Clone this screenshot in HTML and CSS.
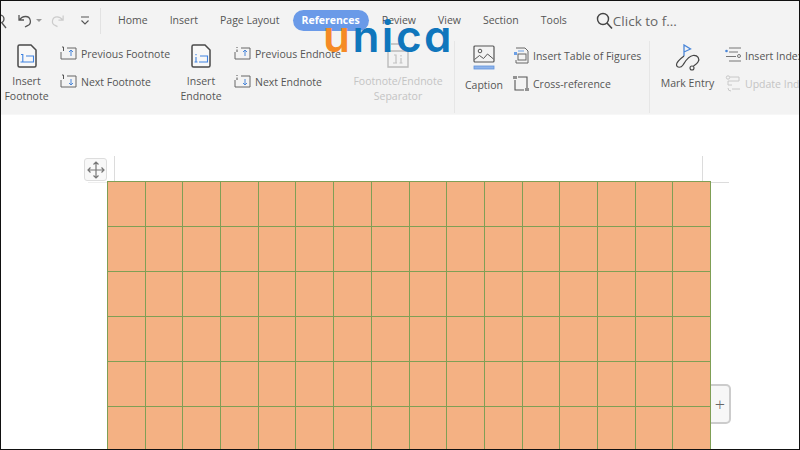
FILE: index.html
```html
<!DOCTYPE html>
<html lang="en">
<head>
<meta charset="utf-8">
<title>References</title>
<link rel="stylesheet" href="styles.css">
</head>
<body>
<div class="frame">
  <header class="ribbon">
    <div class="tabbar">
      <div class="quick">
        <svg class="qa-clip" width="8" height="16" viewBox="0 0 8 16"><circle cx="0" cy="6" r="4" fill="none" stroke="#555" stroke-width="1.3"/><path d="M2 10l4 5" stroke="#555" stroke-width="1.3"/></svg>
        <svg class="qa-undo" width="16" height="16" viewBox="0 0 16 16"><path d="M2 2v5h5M2.500 7C4 4.500 6 3.500 8.500 3.500a4.800 4.800 0 0 1 2 9.200L8 14" fill="none" stroke="#555" stroke-width="1.300"/></svg>
        <svg class="qa-caret" width="6" height="4" viewBox="0 0 6 4"><path d="M0 0h6L3 3z" fill="#999"/></svg>
        <svg class="qa-redo" width="15" height="16" viewBox="0 0 16 16"><path d="M14 2v5H9M13.500 7C12 4.500 10 3.500 7.500 3.500a4.800 4.800 0 0 0-2 9.200L8 14" fill="none" stroke="#ccc" stroke-width="1.300"/></svg>
        <svg class="qa-more" width="10" height="10" viewBox="0 0 10 10"><path d="M1 1h8M1.500 4.500L5 8l3.500-3.500" fill="none" stroke="#555" stroke-width="1.100"/></svg>
        <span class="qa-divider"></span>
      </div>
      <nav class="tabs">
        <span class="tab">Home</span>
        <span class="tab">Insert</span>
        <span class="tab">Page Layout</span>
        <span class="tab tab-active">References</span>
        <span class="tab">Review</span>
        <span class="tab">View</span>
        <span class="tab">Section</span>
        <span class="tab">Tools</span>
      </nav>
      <div class="search">
        <svg width="17" height="18" viewBox="0 0 17 18"><circle cx="7" cy="7" r="5.500" fill="none" stroke="#444" stroke-width="1.400"/><path d="M11 11l5 5.500" stroke="#444" stroke-width="1.600"/></svg>
        <span>Click to f...</span>
      </div>
    </div>

    <div class="tools">
      <div class="big w-footnote">
        <svg class="big-icon" width="20" height="24" viewBox="0 0 20 24"><path d="M1 2.500a1.500 1.500 0 0 1 1.500-1.500H14l5 5v15.500a1.500 1.500 0 0 1-1.500 1.500h-15A1.500 1.500 0 0 1 1 21.500z" fill="#f8f8f8" stroke="#4a4a4a" stroke-width="1.500"/><path d="M4 10.500h1.800v7M3.500 18h4.500M9 12h7.500v6H8" fill="none" stroke="#3f82e0" stroke-width="1.100"/></svg>
        <span class="big-label">Insert<br>Footnote</span>
      </div>
      <div class="small-col w-footnote-nav">
        <div class="small"><svg width="17" height="15" viewBox="0 0 17 15"><path d="M1 6v7h15V2H7" fill="none" stroke="#666"/><path d="M2 1h1.500v4" fill="none" stroke="#555"/><path d="M11 10V4M9 6l2-2 2 2" fill="none" stroke="#4a86d8"/></svg><span>Previous Footnote</span></div>
        <div class="small"><svg width="17" height="15" viewBox="0 0 17 15"><path d="M1 6v7h15V2H7" fill="none" stroke="#666"/><path d="M2 1h1.500v4" fill="none" stroke="#555"/><path d="M11 5v6M9 9l2 2 2-2" fill="none" stroke="#4a86d8"/></svg><span>Next Footnote</span></div>
      </div>
      <div class="big w-endnote">
        <svg class="big-icon" width="20" height="24" viewBox="0 0 20 24"><path d="M1 2.500a1.500 1.500 0 0 1 1.500-1.500H14l5 5v15.500a1.500 1.500 0 0 1-1.500 1.500h-15A1.500 1.500 0 0 1 1 21.500z" fill="#f8f8f8" stroke="#4a4a4a" stroke-width="1.500"/><path d="M5 10v1.300M5 13v5M3.500 18h3M9 12h7.500v6H8" fill="none" stroke="#3f82e0" stroke-width="1.100"/></svg>
        <span class="big-label">Insert<br>Endnote</span>
      </div>
      <div class="small-col w-endnote-nav">
        <div class="small"><svg width="17" height="15" viewBox="0 0 17 15"><path d="M1 6v7h15V2H7" fill="none" stroke="#666"/><path d="M3 1v1M3 3.500V6" fill="none" stroke="#555"/><path d="M11 10V4M9 6l2-2 2 2" fill="none" stroke="#4a86d8"/></svg><span>Previous Endnote</span></div>
        <div class="small"><svg width="17" height="15" viewBox="0 0 17 15"><path d="M1 6v7h15V2H7" fill="none" stroke="#666"/><path d="M3 1v1M3 3.500V6" fill="none" stroke="#555"/><path d="M11 5v6M9 9l2 2 2-2" fill="none" stroke="#4a86d8"/></svg><span>Next Endnote</span></div>
      </div>
      <div class="big w-separator muted">
        <svg class="big-icon separator-icon" width="22" height="25" viewBox="0 0 22 25"><path d="M4 1h14M1 8h20v16H1z" fill="none" stroke="#bbb" stroke-width="1.400"/><path d="M7 12h2v8M6 20h4M14 12v1.500M14 15v5M12.500 20h3" fill="none" stroke="#c2c2c2" stroke-width="1.200"/></svg>
        <span class="big-label">Footnote/Endnote<br>Separator</span>
      </div>
      <span class="divider"></span>
      <div class="big w-caption">
        <svg class="big-icon caption-icon" width="22" height="25" viewBox="0 0 22 25"><rect x="1" y="1" width="20" height="16" rx="1" fill="none" stroke="#555" stroke-width="1.200"/><circle cx="7" cy="6" r="1.800" fill="none" stroke="#555"/><path d="M1.500 14.500l5-4 4 3 4-4.500 6 5" fill="none" stroke="#555"/><rect x="1" y="21" width="20" height="3" fill="#8fb4ea" stroke="#5f92dc" stroke-width=".8"/></svg>
        <span class="big-label caption-label">Caption</span>
      </div>
      <div class="small-col w-figures">
        <div class="small"><svg width="16" height="17" viewBox="0 0 16 17"><path d="M3 1h9l3 3v12H3v-3" fill="none" stroke="#666"/><rect x="1" y="5" width="3" height="3" fill="#6b9fe6"/><rect x="5" y="7" width="8" height="6" fill="none" stroke="#666"/><path d="M5 4h6" stroke="#6b9fe6"/></svg><span>Insert Table of Figures</span></div>
        <div class="small"><svg width="16" height="17" viewBox="0 0 16 17"><path d="M5 2h9v11M11 15H2V5" fill="none" stroke="#555" stroke-width="1.100"/><path d="M1 1v3M3 1v3M13 13v3M15 13v3" stroke="#333" stroke-width="1"/></svg><span>Cross-reference</span></div>
      </div>
      <span class="divider"></span>
      <div class="big w-mark">
        <svg class="big-icon mark-icon" width="26" height="27" viewBox="0 0 26 27"><path d="M9 12V1l6.500 4L9 8" fill="none" stroke="#4a86d8" stroke-width="1.300"/><path d="M9 12C5 15 1 18 1.500 21C2 24 6 24 8 21C10 18 13 12 18 11.500C23 11 25 15 23 18C22 20 20 21 18.500 22" fill="none" stroke="#444" stroke-width="1.200"/><circle cx="17" cy="24" r="2" fill="none" stroke="#444" stroke-width="1.100"/></svg>
        <span class="big-label mark-label">Mark Entry</span>
      </div>
      <div class="small-col w-index">
        <div class="small"><svg width="16" height="17" viewBox="0 0 16 17"><path d="M4 1h12M4 5h9M1 9.500h10M4 14h12" fill="none" stroke="#777"/><circle cx="1.500" cy="4" r="1.300" fill="#4a86d8"/><circle cx="14" cy="9" r="1.500" fill="none" stroke="#777"/></svg><span>Insert Index</span></div>
        <div class="small muted"><svg width="16" height="17" viewBox="0 0 16 17"><circle cx="3" cy="2.500" r="1.700" fill="none" stroke="#c8c8c8"/><path d="M5 2h9v4H3v4h4M7 14h8M3 13a3 3 0 0 0 3 3" fill="none" stroke="#c8c8c8"/></svg><span>Update Index</span></div>
      </div>
    </div>
  </header>

  <main class="page">
    <div class="move-handle">
      <svg width="18" height="18" viewBox="0 0 18 18"><path d="M9 1v16M1 9h16M6.500 3.500L9 1l2.500 2.500M6.500 14.500L9 17l2.500-2.500M3.500 6.500L1 9l2.500 2.500M14.500 6.500L17 9l-2.500 2.500" fill="none" stroke="#777" stroke-width="1.200"/></svg>
    </div>
    <span class="mark mark-left"></span>
    <span class="mark mark-right"></span>
    <span class="mark mark-across"></span>
    <span class="mark mark-under"></span>
    <table class="sheet">
      <tbody>
        <tr><td></td><td></td><td></td><td></td><td></td><td></td><td></td><td></td><td></td><td></td><td></td><td></td><td></td><td></td><td></td><td></td></tr>
        <tr><td></td><td></td><td></td><td></td><td></td><td></td><td></td><td></td><td></td><td></td><td></td><td></td><td></td><td></td><td></td><td></td></tr>
        <tr><td></td><td></td><td></td><td></td><td></td><td></td><td></td><td></td><td></td><td></td><td></td><td></td><td></td><td></td><td></td><td></td></tr>
        <tr><td></td><td></td><td></td><td></td><td></td><td></td><td></td><td></td><td></td><td></td><td></td><td></td><td></td><td></td><td></td><td></td></tr>
        <tr><td></td><td></td><td></td><td></td><td></td><td></td><td></td><td></td><td></td><td></td><td></td><td></td><td></td><td></td><td></td><td></td></tr>
        <tr><td></td><td></td><td></td><td></td><td></td><td></td><td></td><td></td><td></td><td></td><td></td><td></td><td></td><td></td><td></td><td></td></tr>
      </tbody>
    </table>
    <div class="add-row">+</div>
  </main>

  <div class="logo"><span class="logo-u">u</span>nica</div>
</div>
</body>
</html>
```

FILE: styles.css
```css
* { box-sizing: border-box; }
html, body { margin: 0; padding: 0; }
body {
  width: 800px;
  height: 450px;
  overflow: hidden;
  background: #fff;
  font-family: "Open Sans", "Noto Sans", sans-serif;
  color: #555;
}
.frame {
  position: relative;
  width: 800px;
  height: 450px;
  border: 1px solid #111;
  overflow: hidden;
}
.ribbon {
  height: 114px;
  background: #f3f3f3;
  border-bottom: 1px solid #f7f7f7;
}
.tabbar {
  display: flex;
  align-items: center;
  height: 39px;
}
.quick {
  display: flex;
  align-items: center;
  width: 108px;
  height: 100%;
  flex: none;
}
.qa-clip { margin-left: -1px; }
.qa-undo { margin-left: 9px; }
.qa-caret { margin-left: 3px; }
.qa-redo { margin-left: 8px; }
.qa-more { margin-left: 15px; }
.qa-divider {
  width: 1px;
  height: 26px;
  margin-left: 10px;
  background: #e2e2e2;
}
.tabs {
  display: flex;
  align-items: center;
  gap: 4px;
  font-size: 10.500px;
  color: #555;
}
.tab {
  height: 21px;
  line-height: 21px;
  padding: 0 9px;
  white-space: nowrap;
}
.tab-active {
  background: #6a9ae8;
  color: #fff;
  font-weight: 700;
  border-radius: 11px;
}
.search {
  display: flex;
  align-items: center;
  gap: 0;
  margin-left: 20px;
  font-size: 13.500px;
  color: #666;
}
.tools {
  display: flex;
  align-items: flex-start;
  height: 75px;
  font-size: 10.500px;
}
.big {
  display: flex;
  flex-direction: column;
  align-items: center;
  flex: none;
  text-align: center;
}
.big-icon { margin-top: 4px; }
.big-label {
  margin-top: 6px;
  line-height: 15px;
  white-space: nowrap;
}
.separator-icon { margin-top: 3px; }
.caption-icon { margin-top: 5px; }
.caption-label { margin-top: 8px; }
.mark-label { margin-top: 5px; }
.muted { color: #c4c4c4; }
.small-col {
  display: flex;
  flex-direction: column;
  gap: 11px;
  flex: none;
  padding-top: 5px;
}
.small {
  display: flex;
  align-items: center;
  gap: 4px;
  height: 17px;
  white-space: nowrap;
}
.w-footnote { width: 51px; }
.w-footnote-nav { width: 116px; margin-left: 8px; }
.w-endnote { width: 50px; }
.w-endnote-nav { width: 114px; margin-left: 8px; }
.w-separator { width: 102px; margin-left: -1px; }
.divider {
  flex: none;
  width: 1px;
  height: 72px;
  margin-top: 1px;
  margin-left: 5px;
  background: #e6e6e6;
}
.w-caption { width: 58px; }
.w-figures { width: 131px; padding-top: 7px; }
.w-mark { width: 75px; }
.w-index { width: 120px; padding-top: 7px; }
.page {
  position: relative;
  height: 335px;
  padding: 66px 0 0 106px;
  background: #fff;
}
.sheet {
  width: 604px;
  table-layout: fixed;
  border-collapse: separate;
  border-spacing: 1px;
  background: #7f9f55;
}
.sheet td {
  height: 44px;
  padding: 0;
  background: #f4b183;
}
.move-handle {
  position: absolute;
  left: 83px;
  top: 43px;
  width: 23px;
  height: 23px;
  display: flex;
  align-items: center;
  justify-content: center;
  background: #f8f8f8;
  border: 1px solid #ddd;
  border-radius: 3px;
}
.mark { position: absolute; background: #dcdcdc; }
.mark-left { left: 113px; top: 41px; width: 1px; height: 25px; }
.mark-right { left: 701px; top: 41px; width: 1px; height: 25px; }
.mark-across { left: 710px; top: 67px; width: 18px; height: 1px; }
.mark-under { left: 87px; top: 67px; width: 19px; height: 1px; background: #eee; }
.add-row {
  position: absolute;
  left: 710px;
  top: 269px;
  width: 20px;
  height: 40px;
  display: flex;
  align-items: center;
  justify-content: center;
  background: #f7f7f7;
  border: 2px solid #ccc;
  border-left: 0;
  border-radius: 0 5px 5px 0;
  font-size: 18px;
  font-weight: 300;
  color: #666;
}
.logo {
  position: absolute;
  left: 322px;
  top: 10px;
  font-family: "Inter", sans-serif;
  font-size: 44px;
  line-height: 50px;
  font-weight: 600;
  letter-spacing: 2.500px;
  font-feature-settings: "cv11";
  color: #0f76bc;
}
.logo-u { color: #f58a25; }
```
